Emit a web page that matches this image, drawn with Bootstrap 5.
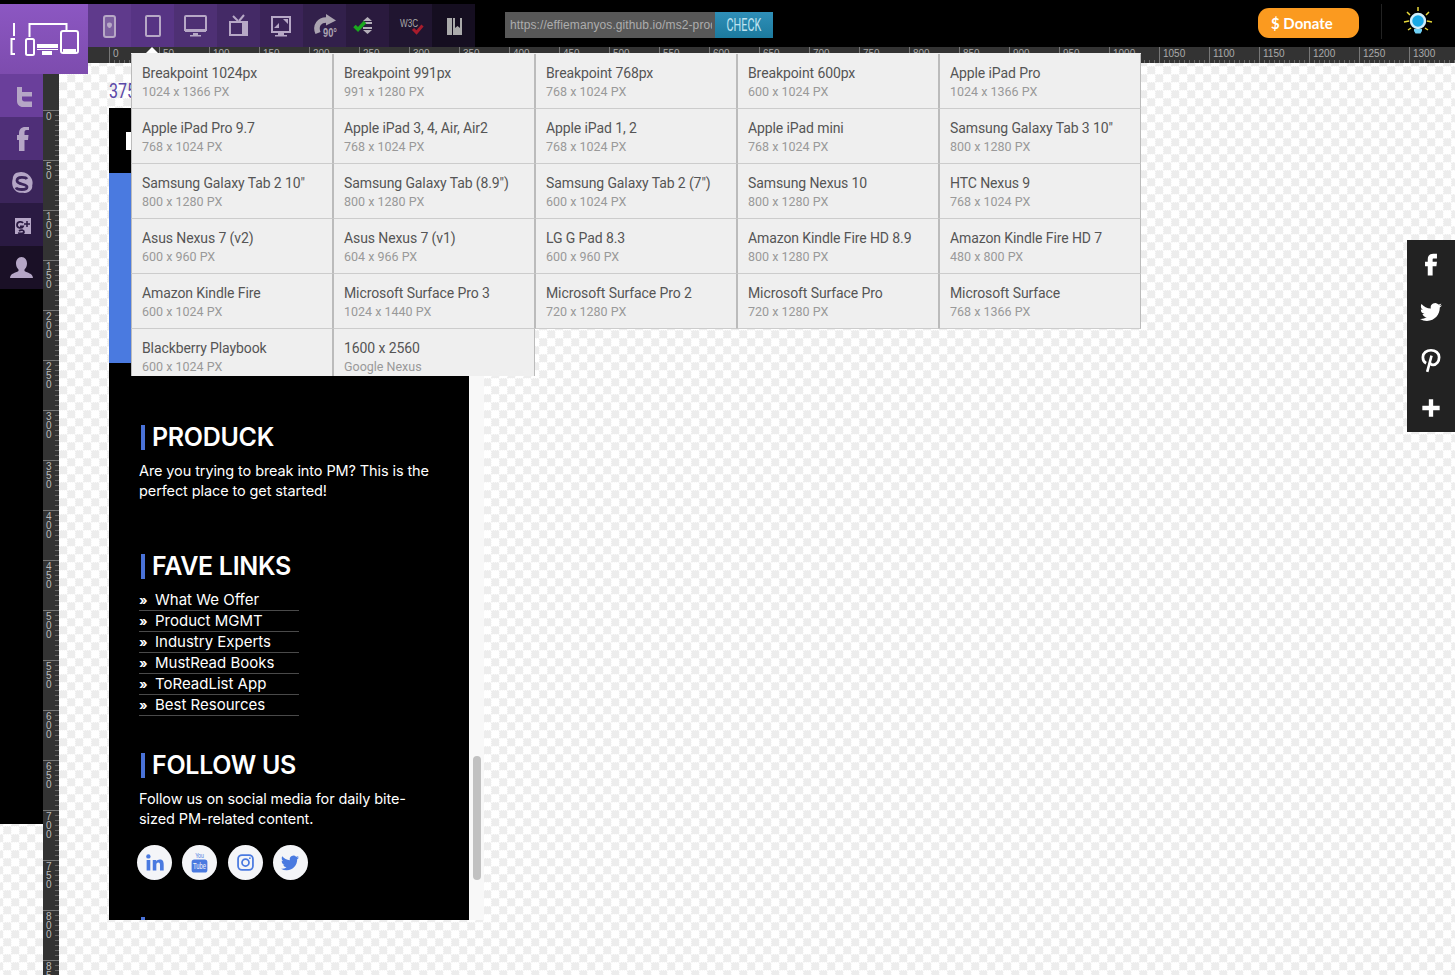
<!DOCTYPE html>
<html>

<head>
  <meta charset="utf-8">
  <meta name="viewport" content="width=device-width">
  <title>Responsive Tester</title>
  <link href="https://cdn.jsdelivr.net/npm/bootstrap@5.3.2/dist/css/bootstrap.min.css" rel="stylesheet" type="text/css" />
  <script src="https://cdn.jsdelivr.net/npm/bootstrap@5.3.2/dist/js/bootstrap.bundle.min.js"></script>
  <style>
    html, body { height: 100%; overflow: hidden; }
    body {
      font-family: "Roboto", sans-serif;
      background-color: #fff;
      background-image:
        conic-gradient(from 270deg at 1px 1px, #f8f8f8 90deg, transparent 0),
        conic-gradient(from 270deg at 1px 1px, #f8f8f8 90deg, transparent 0),
        conic-gradient(#ededed 25%, #fff 0 50%, #ededed 0 75%, #fff 0);
      background-size: 8px 2px, 2px 8px, 16px 16px;
      background-position: 3px 0, 0 2px, 3px 2px;
    }

    /* top bar */
    .topbar { height: 47px; background: #000; padding-left: 88px; }
    .tool { width: 43px; height: 43px; margin-top: 4px; padding-top: 3px; overflow: hidden; color: #b7a8c6; }
    .tool svg { width: 43px; height: 43px; display: block; }
    .tool-1 { background: #5f3a8c; }
    .tool-2 { background: #573484; }
    .tool-3 { background: #4e3074; }
    .tool-4 { background: #442a66; }
    .tool-5 { background: #3b2458; }
    .tool-6 { background: #32204b; color: #aaa3b0; }
    .tool-7 { background: #2a1a3e; color: #b5b0ba; }
    .tool-8 { background: #201530; color: #aaa; }
    .tool-9 { background: #150e20; color: #aaa; }

    .logo-box {
      position: absolute; left: 0; top: 4px; width: 88px; height: 70px; z-index: 5;
      background: linear-gradient(#8c57c2, #7d4cae);
    }
    .logo-box svg { display: block; }

    .url-group { width: 269px; height: 26px; margin: 12px 0 0 30px; flex-wrap: nowrap; }
    .url-input.form-control {
      width: 211px; flex: none; height: 26px; min-height: 0; padding: 0 4px 0 5px;
      border: 0; border-radius: 0; background: #585858; color: #adadad;
      font: 12px/26px "Liberation Sans", sans-serif; letter-spacing: .1px; box-shadow: none;
    }
    .input-group .url-check.btn {
      width: 58px; height: 26px; padding: 0; margin-left: 0; border: 0; border-radius: 0;
      background: linear-gradient(#2f8fb8, #1c7a9e); color: #bfe3f0;
      font: 18px/26px "Liberation Sans Narrow", "Roboto", sans-serif;
    }
    .url-check span { display: inline-block; transform: scaleX(.6); }

    .donate-btn.btn {
      width: 101px; height: 30px; margin: 8px 22px 0 0; border: 0; border-radius: 11px;
      background: #fb9a1f; color: #fff; font: 700 15px/29px "Lato", sans-serif; text-align: left; padding: 0 0 0 13px;
    }
    .top-sep { width: 1px; height: 35px; margin: 4px 16px 0 0; background: #222; }
    .bulb { width: 40px; height: 36px; margin: 6px 17px 0 0; }

    /* rulers */
    .ruler-top { height: 16px; padding-left: 21px; background: #333; margin-left: 88px; white-space: nowrap; overflow: hidden; }
    .tick-h {
      flex: none; width: 50px; height: 16px; border-left: 1px solid #777; padding-left: 3px;
      color: #aaa; font: 10px/13px "Liberation Sans", sans-serif;
      background: repeating-linear-gradient(90deg, transparent 0 4px, #666 4px 5px) left bottom / 100% 3px no-repeat;
    }
    .ruler-left { width: 16px; background: #333; padding-top: 47px; flex: none; height: 912px; overflow: hidden; }
    .tick-v {
      height: 50px; border-top: 1px solid #777; padding: 1px 0 0 3px; width: 16px;
      color: #bbb; font: 10px/9px "Liberation Sans", sans-serif; word-break: break-all;
      background: repeating-linear-gradient(180deg, transparent 0 4px, #666 4px 5px) right top / 4px 100% no-repeat;
    }
    .tick-v span { display: block; width: 7px; }

    /* left social */
    .side-col { width: 43px; height: 750px; margin-top: 11px; background: #000; flex: none; }
    .side-btn { width: 43px; height: 43px; color: #b5a6c6; }
    .side-btn svg { width: 43px; height: 43px; display: block; }
    .side-1 { background: #6a3f9b; }
    .side-2 { background: #4f2f78; }
    .side-3 { background: #3b255a; }
    .side-4 { background: #2a1a42; }
    .side-5 { background: #1a1026; }

    /* device */
    .stage { padding: 6px 0 0 50px; }
    .size-label { height: 39px; color: #5a48a8; font: 20px/44px "Liberation Sans Narrow", "Roboto", sans-serif; }
    .size-label span { display: inline-block; transform: scaleX(.8); transform-origin: left; }
    .device { width: 375px; height: 812px; overflow: hidden; }
    .screen { width: 360px; background: #000; color: #fff; font-family: "Inter", sans-serif; flex: none; }
    .hero-top { height: 65px; padding: 24px 0 0 17px; }
    .hero-mark { width: 6px; height: 18px; background: #fff; }
    .hero-blue { height: 190px; background: #4a7ae0; }
    .foot { padding: 62px 0 0 30px; }
    .foot-title {
      margin: 0 0 11px 2px; padding-left: 7px; border-left: 4px solid #4a72d8; height: 25px;
      font: 600 25px/25px "Inter", sans-serif; letter-spacing: -.3px; color: #fff;
    }
    .foot-text { margin: 0; font-size: 14.5px; line-height: 20px; letter-spacing: -.1px; width: 300px; }
    .text-follow { width: 285px; }
    .text-product { margin-bottom: 53px; }
    .foot-list { margin: 10px 0 37px; width: 160px; }
    .foot-list li { height: 21px; line-height: 20px; border-bottom: 1px solid #4a4a4a; font-size: 15px; }
    .foot-list .raquo { display: inline-block; width: 16px; font-size: 13px; font-weight: 700; }
    .social-row { margin: 16px 0 37px -2px; gap: 10.3px; }
    .social-dot { width: 35px; height: 35px; background: #f4f5f8; color: #4a7ae0; }
    .social-dot svg { width: 21px; height: 21px; display: block; }
    .social-dot svg.bird { width: 18px; height: 18px; }
    .scroll-track { width: 15px; background: #f8f8f8; flex: none; }
    .scroll-thumb { width: 8px; height: 124px; margin: 648px 0 0 4px; background: #c1c1c1; border-radius: 4px; }

    /* breakpoint menu */
    .size-menu {
      position: absolute; left: 131px; top: 53px; width: 1010px; height: 323px; overflow: hidden; z-index: 4;
    }
    .size-caret {
      position: absolute; left: 146px; top: 47px; z-index: 4; width: 0; height: 0;
      border: 6px solid transparent; border-top: 0; border-bottom: 6px solid #fff;
    }
    .size-grid { border-top: 1px solid #efefef; }
    .size-cell {
      height: 55px; padding: 10px 0 0 10px; background: #efefef;
      border-left: 1px solid #bbb; border-right: 1px solid #bbb; border-bottom: 1px solid #ccc;
    }
    .size-name { color: #555; font-size: 14px; letter-spacing: -.1px; line-height: 19px; white-space: nowrap; }
    .size-dim { color: #999; font-size: 12.5px; line-height: 17px; white-space: nowrap; }

    /* share bar */
    .share-bar { position: absolute; right: 0; top: 240px; width: 48px; background: #222; z-index: 6; }
    .share-btn { height: 48px; color: #fff; }
    .share-btn svg { width: 26px; height: 26px; display: block; }
    .share-btn svg.bird { width: 22px; height: 22px; }
  </style>
</head>

<body>
  <div class="logo-box">
    <svg width="88" height="70" viewBox="0 0 88 70" fill="none" stroke="#fff">
      <path d="M14 19v13" stroke-width="2"/>
      <path d="M15 35h-3.500v15h3.500" stroke-width="2"/>
      <path d="M29.500 33V20h37v6" stroke-width="2"/>
      <rect x="26" y="35" width="8" height="16" rx="1.500" stroke-width="2"/>
      <path d="M37 40h21v4h-21z" fill="#fff" stroke="none"/>
      <path d="M37 45h21v1h-21zM42 47h10v4H42z" fill="#fff" stroke="none"/>
      <rect x="61" y="27" width="17" height="22" rx="2" stroke-width="2"/>
      <path d="M63 45h13v3h-13z" fill="#fff" stroke="none"/>
    </svg>
  </div>

  <div class="d-flex topbar">
    <div class="tool tool-1">
      <svg viewBox="0 0 43 43" fill="none" stroke="currentColor" stroke-width="2">
        <rect x="16" y="9" width="11" height="21" rx="2" fill="currentColor" fill-opacity=".35"/>
        <path d="M21.500 15.500c-2.500 0-2.500 1-2.500 2.500s1.500 3 2.500 3 2.500-1.500 2.500-3-.5-2.500-2.500-2.500z" fill="currentColor" stroke="none"/>
      </svg>
    </div>
    <div class="tool tool-2">
      <svg viewBox="0 0 43 43" fill="none" stroke="currentColor" stroke-width="2">
        <rect x="15" y="9" width="14" height="20" rx="1"/>
      </svg>
    </div>
    <div class="tool tool-3">
      <svg viewBox="0 0 43 43" fill="none" stroke="currentColor" stroke-width="2">
        <path d="M12 9h19a1 1 0 0 1 1 1v13H11V10a1 1 0 0 1 1-1z"/>
        <path d="M11 23h21v2H11zM19 26h5v2h3v1.500H16V28h3z" fill="currentColor" stroke="none"/>
      </svg>
    </div>
    <div class="tool tool-4">
      <svg viewBox="0 0 43 43" fill="none" stroke="currentColor" stroke-width="2">
        <path d="M16 9l5 5M27 8l-5 6" />
        <rect x="12" y="14" width="19" height="15" fill="currentColor" stroke="none"/>
        <rect x="14" y="16" width="11" height="11" fill="#442a66" stroke="none"/>
      </svg>
    </div>
    <div class="tool tool-5">
      <svg viewBox="0 0 43 43" fill="none" stroke="currentColor" stroke-width="2">
        <rect x="12" y="10" width="18" height="15"/>
        <path d="M14 21l5-5v5zM28 12v5l-5-5zM18 26h6v2h3v1.500H15V28h3z" fill="currentColor" stroke="none"/>
      </svg>
    </div>
    <div class="tool tool-6">
      <svg viewBox="0 0 43 43" fill="none" stroke="currentColor">
        <path d="M15 26c-3-7 1-14 10-13" stroke-width="5.500"/>
        <path d="M23 7l10 6.500-10 5z" fill="currentColor" stroke="none"/>
        <text x="20" y="30" fill="currentColor" stroke="none" font-family="Liberation Sans" font-weight="700" font-size="12" textLength="14" lengthAdjust="spacingAndGlyphs">90°</text>
      </svg>
    </div>
    <div class="tool tool-7">
      <svg viewBox="0 0 43 43" fill="none">
        <path d="M21.500 10l4.500 4h-9zM17 23h9l-4.500 4zM17 15h9v2h-9zM17 20h9v2h-9z" fill="currentColor"/>
        <path d="M8.500 19l3.500 3.500 7-7.500" stroke="#1aa81e" stroke-width="3.500"/>
      </svg>
    </div>
    <div class="tool tool-8">
      <svg viewBox="0 0 43 43" fill="none">
        <text x="11" y="20" fill="currentColor" font-family="Liberation Sans" font-size="10" textLength="18" lengthAdjust="spacingAndGlyphs">W3C</text>
        <path d="M24 22l3.500 3.500 6-7" stroke="#a81c2c" stroke-width="3"/>
      </svg>
    </div>
    <div class="tool tool-9">
      <svg viewBox="0 0 43 43">
        <path d="M15 11h15v17H15z" fill="currentColor"/>
        <path d="M20 11h1v17h-1zM23 11h5v10l-2.500-2-2.500 2z" fill="#150e20"/>
      </svg>
    </div>

    <div class="input-group url-group">
      <input class="form-control url-input" type="text" readonly value="https://effiemanyos.github.io/ms2-produck">
      <button class="btn url-check" type="button"><span>CHECK</span></button>
    </div>

    <div class="flex-grow-1"></div>

    <button class="btn donate-btn" type="button">$ Donate</button>
    <div class="top-sep"></div>
    <div class="bulb">
      <svg width="40" height="36" viewBox="0 0 40 36" fill="none">
        <path d="M20 1v4M9 6l3 3M31 6l-3 3M6 16l5-1M34 16l-5-1M10 24l3-2M30 24l-3-2" stroke="#e7d83a" stroke-width="1.500"/>
        <circle cx="20" cy="15" r="7" fill="#18a9e6" stroke="#cfeefb" stroke-width="2.500"/>
        <path d="M16 23h8v2l-1.500 2.500h-5L16 25z" fill="#6fd0f5"/>
      </svg>
    </div>
  </div>

  <div class="d-flex ruler-top" id="rulerTop"></div>

  <div class="d-flex">
    <div class="side-col">
      <div class="side-btn side-1">
        <svg viewBox="0 0 43 43" fill="currentColor"><path d="M17 13h5v5h10v4.500H22v2.500c0 1.500 1 2.500 2.500 2.500H32V33h-9c-3.500 0-6-2.500-6-6z"/></svg>
      </div>
      <div class="side-btn side-2">
        <svg viewBox="0 0 43 43" fill="currentColor"><path d="M24.500 34V23h3.500l.5-5h-4v-2.500c0-1.500.5-2.500 2-2.500H29v-3h-3.500c-4.500 0-6.500 2.500-6.500 6.500V18h-2v5h2v11z"/></svg>
      </div>
      <div class="side-btn side-3">
        <svg viewBox="0 0 43 43"><path d="M18 12.500c5-2 12 1.500 14 7 .8 2.500.8 4 .2 6 .8 4-4 8.500-9 7.200-6 .8-10.500-3-11-9 0-2 0-3 .6-5 0-3 2.200-6.200 5.200-6.200z" fill="currentColor"/><path d="M27 19c-1-2-10-3-10 1.500S27 23.500 27 27s-10 3-11 .5" fill="none" stroke="#3b255a" stroke-width="2.800"/></svg>
      </div>
      <div class="side-btn side-4">
        <svg viewBox="0 0 43 43"><path d="M15 15h16v16H15z" fill="currentColor"/><path d="M23 20c-1-2-6-1.500-6 2s5 3.500 6 1.500h-3M19 28c2-1.500 5-1 5 1s-4 1.500-6 1" fill="none" stroke="#2a1a42" stroke-width="1.800"/><path d="M27 18v6M24 21h6" stroke="#2a1a42" stroke-width="1.500"/></svg>
      </div>
      <div class="side-btn side-5">
        <svg viewBox="0 0 43 43" fill="currentColor"><path d="M21.500 11c3.500 0 5.500 3 5.500 6.500 0 2.500-1 4.500-2.500 6v1.500c3 2 8 2 8.500 7H10c.5-5 5.500-5 8.500-7v-1.500c-1.500-1.500-2.500-3.500-2.500-6 0-3.500 2-6.500 5.500-6.500z"/></svg>
      </div>
    </div>

    <div class="ruler-left" id="rulerLeft"></div>

    <div class="stage">
      <div class="size-label"><span>375</span></div>
      <div class="d-flex device">
        <div class="screen">
          <div class="hero-top"><div class="hero-mark"></div></div>
          <div class="hero-blue"></div>
          <div class="foot">
            <h2 class="foot-title">PRODUCK</h2>
            <p class="foot-text text-product">Are you trying to break into PM? This is the perfect place to get started!</p>

            <h2 class="foot-title">FAVE LINKS</h2>
            <ul class="list-unstyled foot-list">
              <li><span class="raquo">»</span>What We Offer</li>
              <li><span class="raquo">»</span>Product MGMT</li>
              <li><span class="raquo">»</span>Industry Experts</li>
              <li><span class="raquo">»</span>MustRead Books</li>
              <li><span class="raquo">»</span>ToReadList App</li>
              <li><span class="raquo">»</span>Best Resources</li>
            </ul>

            <h2 class="foot-title">FOLLOW US</h2>
            <p class="foot-text text-follow">Follow us on social media for daily bite-sized PM-related content.</p>

            <div class="d-flex social-row">
              <div class="social-dot rounded-circle d-flex align-items-center justify-content-center">
                <svg viewBox="0 0 24 24" fill="currentColor"><circle cx="5" cy="5" r="2.500"/><path d="M3 9h4.200v12H3zM10 9h4v1.800c.8-1.300 2.300-2.100 4-2.100 3.500 0 4.500 2.300 4.500 5.500V21h-4.200v-6c0-1.500-.3-3-2-3s-2.200 1.400-2.200 3v6H10z"/></svg>
              </div>
              <div class="social-dot rounded-circle d-flex align-items-center justify-content-center">
                <svg viewBox="0 0 24 24"><text x="7" y="7" fill="currentColor" font-family="Liberation Sans" font-size="9" textLength="10" lengthAdjust="spacingAndGlyphs">You</text><rect x="3" y="8.500" width="18" height="15" rx="3" fill="currentColor"/><text x="4.500" y="19.500" fill="#f4f5f8" font-family="Liberation Sans" font-size="10" textLength="15" lengthAdjust="spacingAndGlyphs">Tube</text></svg>
              </div>
              <div class="social-dot rounded-circle d-flex align-items-center justify-content-center">
                <svg viewBox="0 0 24 24" fill="none" stroke="currentColor" stroke-width="2"><rect x="3.500" y="3.500" width="17" height="17" rx="4.500"/><circle cx="12" cy="12" r="4"/><circle cx="17" cy="7" r="1" fill="currentColor" stroke="none"/></svg>
              </div>
              <div class="social-dot rounded-circle d-flex align-items-center justify-content-center">
                <svg class="bird" viewBox="0 0 24 24" fill="currentColor"><path d="M23.953 4.570a10 10 0 01-2.825.775 4.958 4.958 0 002.163-2.723c-.951.555-2.005.959-3.127 1.184a4.920 4.920 0 00-8.384 4.482C7.690 8.095 4.067 6.130 1.640 3.162a4.822 4.822 0 00-.666 2.475c0 1.710.870 3.213 2.188 4.096a4.904 4.904 0 01-2.228-.616v.060a4.923 4.923 0 003.946 4.827 4.996 4.996 0 01-2.212.085 4.936 4.936 0 004.604 3.417 9.867 9.867 0 01-6.102 2.105c-.390 0-.779-.023-1.170-.067a13.995 13.995 0 007.557 2.209c9.053 0 13.998-7.496 13.998-13.985 0-.210 0-.420-.015-.630A9.935 9.935 0 0024 4.590z"/></svg>
              </div>
            </div>

            <div class="foot-title"></div>
          </div>
        </div>
        <div class="scroll-track"><div class="scroll-thumb"></div></div>
      </div>
    </div>
  </div>

  <div class="size-caret"></div>
  <div class="size-menu">
    <div class="row row-cols-5 g-0 size-grid" id="sizeMenu"></div>
  </div>

  <div class="share-bar">
    <div class="share-btn d-flex align-items-center justify-content-center">
      <svg viewBox="0 0 24 24" fill="currentColor"><path d="M14 7h3.500V2.500H14c-3 0-5 2-5 5V10H6.500v4H9v8.500h4.500V14H17l.5-4h-4V8c0-.600.400-1 .500-1z"/></svg>
    </div>
    <div class="share-btn d-flex align-items-center justify-content-center">
      <svg class="bird" viewBox="0 0 24 24" fill="currentColor"><path d="M23.953 4.570a10 10 0 01-2.825.775 4.958 4.958 0 002.163-2.723c-.951.555-2.005.959-3.127 1.184a4.920 4.920 0 00-8.384 4.482C7.690 8.095 4.067 6.130 1.640 3.162a4.822 4.822 0 00-.666 2.475c0 1.710.870 3.213 2.188 4.096a4.904 4.904 0 01-2.228-.616v.060a4.923 4.923 0 003.946 4.827 4.996 4.996 0 01-2.212.085 4.936 4.936 0 004.604 3.417 9.867 9.867 0 01-6.102 2.105c-.390 0-.779-.023-1.170-.067a13.995 13.995 0 007.557 2.209c9.053 0 13.998-7.496 13.998-13.985 0-.210 0-.420-.015-.630A9.935 9.935 0 0024 4.590z"/></svg>
    </div>
    <div class="share-btn d-flex align-items-center justify-content-center">
      <svg viewBox="0 0 24 24" fill="none" stroke="currentColor" stroke-width="2.500"><path d="M7.500 15c-2-1-3-3-3-5.500C4.500 5.500 8 3 12 3s7.500 2.500 7.500 6.500c0 4-2.500 7-5.500 7-1.500 0-2.500-.8-3-1.800"/><path d="M12.500 8 8.500 23" stroke-width="2.400"/></svg>
    </div>
    <div class="share-btn d-flex align-items-center justify-content-center">
      <svg viewBox="0 0 24 24" fill="currentColor"><path d="M10 4h4v6h6v4h-6v6h-4v-6H4v-4h6z"/></svg>
    </div>
  </div>

  <script>
    const rulerTop = document.querySelector("#rulerTop")
    for (let i = 0; i <= 1300; i += 50) {
      const tick = document.createElement("div")
      tick.className = "tick-h"
      tick.textContent = i
      rulerTop.appendChild(tick)
    }

    const rulerLeft = document.querySelector("#rulerLeft")
    for (let i = 0; i <= 850; i += 50) {
      const tick = document.createElement("div")
      tick.className = "tick-v"
      tick.innerHTML = `<span>${i}</span>`
      rulerLeft.appendChild(tick)
    }

    const sizes = [
      ["Breakpoint 1024px", "1024 x 1366 PX"], ["Breakpoint 991px", "991 x 1280 PX"], ["Breakpoint 768px", "768 x 1024 PX"], ["Breakpoint 600px", "600 x 1024 PX"], ["Apple iPad Pro", "1024 x 1366 PX"],
      ["Apple iPad Pro 9.7", "768 x 1024 PX"], ["Apple iPad 3, 4, Air, Air2", "768 x 1024 PX"], ["Apple iPad 1, 2", "768 x 1024 PX"], ["Apple iPad mini", "768 x 1024 PX"], ["Samsung Galaxy Tab 3 10\"", "800 x 1280 PX"],
      ["Samsung Galaxy Tab 2 10\"", "800 x 1280 PX"], ["Samsung Galaxy Tab (8.9\")", "800 x 1280 PX"], ["Samsung Galaxy Tab 2 (7\")", "600 x 1024 PX"], ["Samsung Nexus 10", "800 x 1280 PX"], ["HTC Nexus 9", "768 x 1024 PX"],
      ["Asus Nexus 7 (v2)", "600 x 960 PX"], ["Asus Nexus 7 (v1)", "604 x 966 PX"], ["LG G Pad 8.3", "600 x 960 PX"], ["Amazon Kindle Fire HD 8.9", "800 x 1280 PX"], ["Amazon Kindle Fire HD 7", "480 x 800 PX"],
      ["Amazon Kindle Fire", "600 x 1024 PX"], ["Microsoft Surface Pro 3", "1024 x 1440 PX"], ["Microsoft Surface Pro 2", "720 x 1280 PX"], ["Microsoft Surface Pro", "720 x 1280 PX"], ["Microsoft Surface", "768 x 1366 PX"],
      ["Blackberry Playbook", "600 x 1024 PX"], ["1600 x 2560", "Google Nexus"]
    ]
    const sizeMenu = document.querySelector("#sizeMenu")
    for (let i = 0; i < sizes.length; i++) {
      const cell = document.createElement("div")
      cell.className = "col"
      cell.innerHTML = `<div class="size-cell"><div class="size-name">${sizes[i][0]}</div><div class="size-dim">${sizes[i][1]}</div></div>`
      sizeMenu.appendChild(cell)
    }
  </script>
</body>

</html>
